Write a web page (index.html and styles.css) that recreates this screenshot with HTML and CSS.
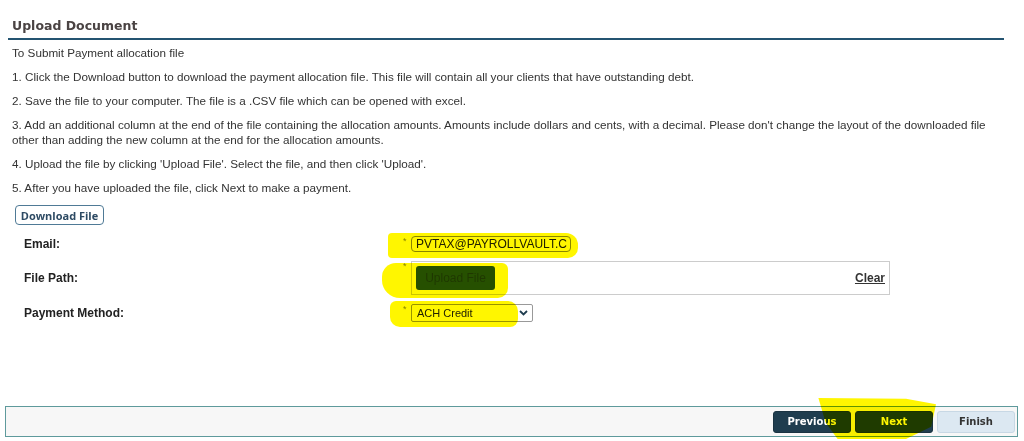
FILE: index.html
```html
<!DOCTYPE html>
<html lang="en">
<head>
    <meta charset="UTF-8" />
    <title>Upload Document</title>
    <link rel="stylesheet" href="styles.css">
</head>
<body>
    <main class="panel">
        <h2 class="panel-title">Upload Document</h2>

        <section class="instructions">
            <p>To Submit Payment allocation file</p>
            <p>1. Click the Download button to download the payment allocation file. This file will contain all your clients that have outstanding debt.</p>
            <p>2. Save the file to your computer. The file is a .CSV file which can be opened with excel.</p>
            <p>3. Add an additional column at the end of the file containing the allocation amounts. Amounts include dollars and cents, with a decimal. Please don't change the layout of the downloaded file other than adding the new column at the end for the allocation amounts.</p>
            <p>4. Upload the file by clicking 'Upload File'. Select the file, and then click 'Upload'.</p>
            <p>5. After you have uploaded the file, click Next to make a payment.</p>
        </section>

        <button class="btn-outline">Download File</button>

        <section class="form">
            <div class="form-row">
                <label>Email:</label>
                <div class="field">
                    <span class="req">*</span>
                    <div class="text-input">PVTAX@PAYROLLVAULT.C</div>
                </div>
            </div>
            <div class="form-row">
                <label>File Path:</label>
                <div class="field">
                    <span class="req">*</span>
                    <div class="file-box">
                        <button class="btn-upload">Upload File</button>
                        <a href="#" class="clear-link">Clear</a>
                    </div>
                </div>
            </div>
            <div class="form-row">
                <label>Payment Method:</label>
                <div class="field">
                    <span class="req">*</span>
                    <div class="select">
                        <span>ACH Credit</span>
                        <svg width="9" height="6" viewBox="0 0 9 6"><path d="M1 1l3.5 3.5L8 1" fill="none" stroke="#1f3d4f" stroke-width="1.8"/></svg>
                    </div>
                </div>
            </div>
        </section>
    </main>

    <footer class="wizard-bar">
        <button class="btn-dark">Previous</button>
        <button class="btn-dark">Next</button>
        <button class="btn-light">Finish</button>
    </footer>

    <!-- highlighter marks drawn over the page -->
    <div class="marker mark-email"></div>
    <div class="marker mark-file"></div>
    <div class="marker mark-select"></div>
    <div class="marker mark-next"></div>
</body>
</html>
```

FILE: styles.css
```css
/* Main Styles */
body {
    margin: 0;
    padding: 0;
    background-color: #ffffff;
    color: #333333;
    font-family: 'Liberation Sans', Arial, sans-serif;
    font-size: 12px;
    position: relative;
    height: 441px;
    overflow: hidden;
}

.panel {
    margin-left: 8px;
    width: 996px;
    padding-top: 18px;
}

.panel-title {
    margin: 0;
    padding-left: 4px;
    height: 20px;
    font-family: 'DejaVu Sans', Verdana, sans-serif;
    font-size: 12.5px;
    font-weight: bold;
    color: #4a4343;
    border-bottom: 2px solid #245471;
}

/* Instructions */
.instructions {
    padding: 5px 4px 0;
}

.instructions p {
    margin: 0 0 9px;
    line-height: 15px;
    font-size: 11.7px;
}

.btn-outline {
    margin: 1px 0 0 7px;
    width: 89px;
    height: 20px;
    padding: 0;
    background-color: #ffffff;
    border: 1px solid #4f7a96;
    border-radius: 4px;
    color: #2d4a63;
    font-family: 'Open Sans', Tahoma, sans-serif;
    font-size: 11px;
    font-weight: bold;
}

/* Form */
.form {
    margin-top: 11px;
    display: flex;
    flex-direction: column;
    gap: 9px;
}

.form-row {
    display: grid;
    grid-template-columns: 395px 1fr;
    align-items: center;
}

.form-row label {
    padding-left: 16px;
    font-weight: bold;
    color: #222222;
}

.field {
    display: flex;
    align-items: flex-start;
    gap: 3px;
}

.req {
    font-size: 9px;
    color: #888888;
    width: 5px;
    line-height: 9px;
    margin-top: 1px;
}

.text-input {
    width: 154px;
    height: 14px;
    line-height: 14px;
    padding-left: 4px;
    border: 1px solid #8a8a8a;
    border-radius: 4px;
    color: #222222;
    font-size: 12px;
}

.file-box {
    width: 469px;
    height: 32px;
    border: 1px solid #cccccc;
    display: flex;
    align-items: center;
    justify-content: space-between;
    padding: 0 4px 0 4px;
}

.btn-upload {
    width: 79px;
    height: 24px;
    padding: 0;
    border: none;
    border-radius: 3px;
    background-color: #26537a;
    color: #1f3a5c;
    font-family: 'Liberation Sans', Arial, sans-serif;
    font-size: 12px;
}

.clear-link {
    color: #333333;
    font-weight: bold;
    text-decoration: underline;
}

.select {
    width: 111px;
    height: 16px;
    border: 1px solid #999999;
    border-radius: 2px;
    padding: 0 4px 0 5px;
    display: flex;
    align-items: center;
    justify-content: space-between;
    font-size: 11px;
    color: #222222;
}

/* Wizard bar */
.wizard-bar {
    position: absolute;
    left: 5px;
    top: 406px;
    width: 1009px;
    height: 29px;
    border: 1px solid #5e9a9c;
    background-color: #f7f7f7;
    display: flex;
    justify-content: flex-end;
    align-items: center;
    gap: 4px;
    padding-right: 2px;
}

.wizard-bar button {
    width: 78px;
    height: 22px;
    padding: 0;
    border-radius: 3px;
    font-family: 'DejaVu Sans', Verdana, sans-serif;
    font-size: 10px;
    font-weight: bold;
}

.btn-dark {
    background-color: #1f3d4f;
    border: 1px solid #1a3342;
    color: #ffffff;
}

.btn-light {
    background-color: #dce8f2;
    border: 1px solid #c8d8e5;
    color: #333333;
}

/* Highlighter */
.marker {
    position: absolute;
    background-color: #fff600;
    mix-blend-mode: multiply;
}

.mark-email {
    left: 388px;
    top: 233px;
    width: 190px;
    height: 25px;
    border-radius: 4px 12px 10px 4px;
}

.mark-file {
    left: 382px;
    top: 263px;
    width: 126px;
    height: 35px;
    border-radius: 14px 6px 10px 18px;
}

.mark-select {
    left: 390px;
    top: 301px;
    width: 128px;
    height: 26px;
    border-radius: 6px 10px 8px 10px;
}

.mark-next {
    left: 816px;
    top: 398px;
    width: 120px;
    height: 41px;
    clip-path: polygon(2% 0%, 75% 2%, 100% 15%, 96% 70%, 75% 100%, 18% 100%, 8% 60%);
}
```
